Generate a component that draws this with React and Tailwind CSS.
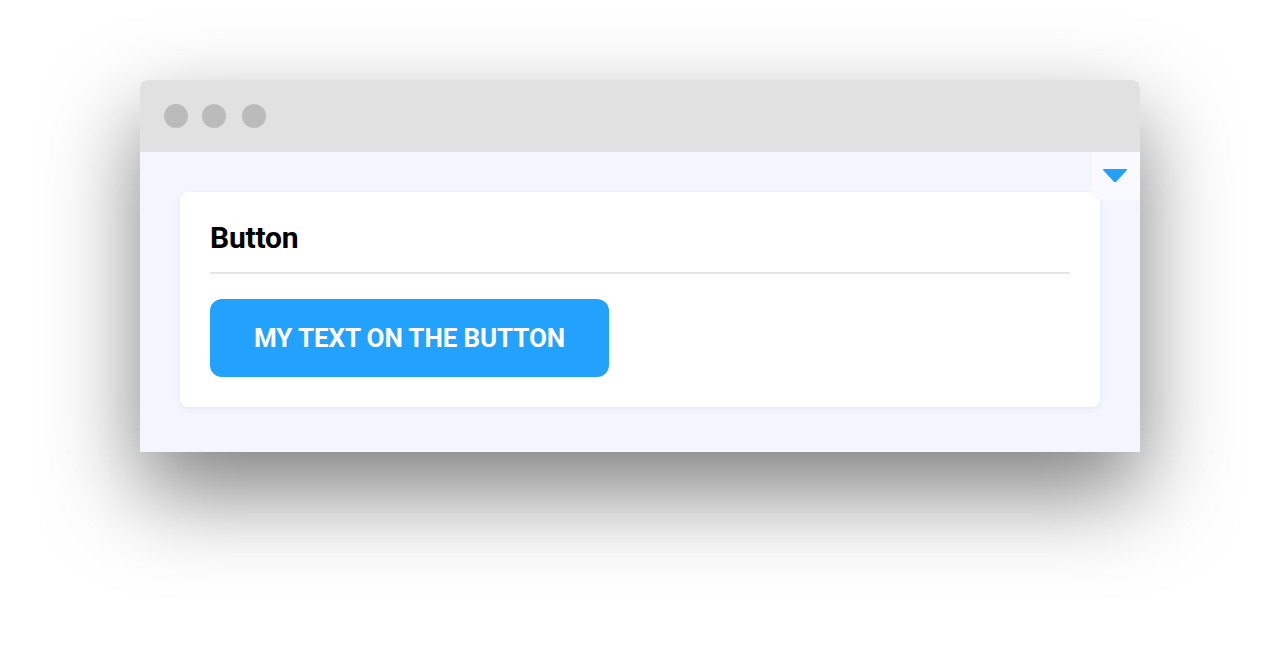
export default function App() {
  return (
    <div className="w-[1280px] h-[652px] bg-white pt-[80px] pl-[140px] font-['Roboto',sans-serif]">
      <div className="w-[1000px] h-[372px] rounded-t-lg shadow-[0_40px_90px_rgba(0,0,0,0.5)] flex flex-col">
        {/* Title bar */}
        <div className="h-[72px] bg-[#e1e1e1] rounded-t-lg flex items-center pl-[24px]">
          <span className="w-6 h-6 rounded-full bg-[#bbbbbb]" />
          <span className="w-6 h-6 rounded-full bg-[#bbbbbb] ml-[14px]" />
          <span className="w-6 h-6 rounded-full bg-[#bbbbbb] ml-[16px]" />
        </div>

        {/* Content */}
        <div className="relative flex-1 bg-[#f3f6fe] pt-[40px] px-[40px]">
          <div className="absolute top-0 right-0 w-[48px] h-[48px] bg-[#f8faff] rounded-bl-lg flex items-center justify-center">
            <svg width="26" height="14" viewBox="0 0 26 14" className="-mt-[1px] -ml-[2px]">
              <path d="M2 0 H24 Q26 0 24.5 1.6 L14.4 12.6 Q13 14 11.6 12.6 L1.5 1.6 Q0 0 2 0 Z" fill="#22a2fd" />
            </svg>
          </div>

          <div className="bg-white rounded-lg shadow-[0_2px_6px_rgba(0,0,0,0.06)] px-[30px] pt-[28px] pb-[30px]">
            <h2 className="text-[30px] font-bold text-black leading-[36px] tracking-[-0.2px]">Button</h2>
            <div className="h-[2px] bg-[#e4e4e7] mt-[16px]" />
            <button className="mt-[25px] w-[399px] h-[78px] bg-[#22a2fd] rounded-xl text-white text-[26px] font-bold uppercase tracking-[-0.1px]">
              My text on the button
            </button>
          </div>
        </div>
      </div>
    </div>
  );
}
